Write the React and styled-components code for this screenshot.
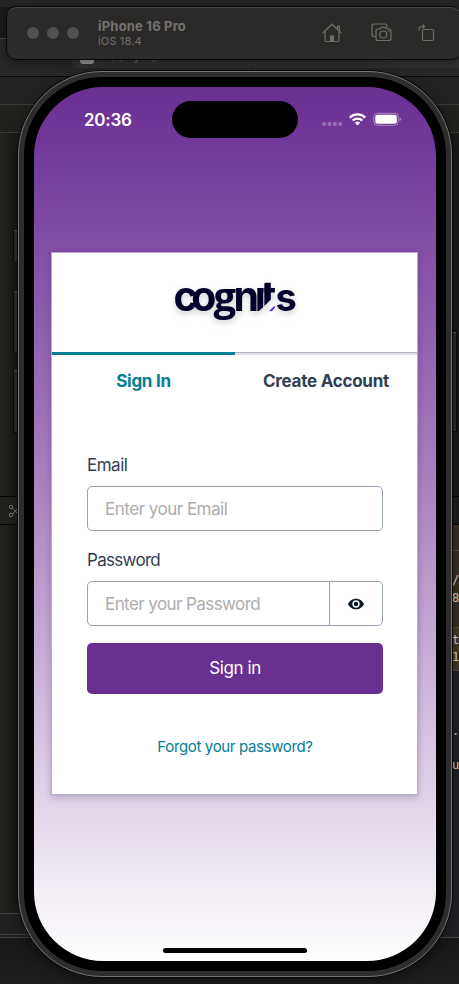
import React from "react";
import styled, { createGlobalStyle, css } from "styled-components";

const Global = createGlobalStyle`
  * { box-sizing: border-box; }
  body { margin: 0; overflow: hidden; background: #1b1b1b; }
  input, button { font: inherit; }
`;

const Desktop = styled.div`
  position: relative;
  width: 459px;
  height: 984px;
  overflow: hidden;
  background: #1f201c;
  font-family: Inter, "Liberation Sans", sans-serif;
`;

/* Editor windows behind the simulator */
const Backdrop = styled.div`
  display: grid;
  grid-template-columns: 250px 209px;
  height: 984px;
`;
const Pane = styled.div`
  display: flex;
  flex-direction: column;
`;
const Band = styled.div`
  flex: none;
  height: ${(p) => p.$h}px;
  padding-bottom: ${(p) => p.$pb || 0}px;
  background: ${(p) => p.$bg};
  border-top: ${(p) => (p.$line ? `1px solid ${p.$line}` : "0")};
  display: flex;
  align-items: ${(p) => p.$align || "center"};
`;
const SchemePill = styled.div`
  width: ${(p) => p.$w}px;
  height: 24px;
  margin-left: ${(p) => p.$ml || 0}px;
  margin-bottom: 8px;
  border-radius: 0 0 0 5px;
  background: #333331;
  color: #5c5c5a;
  font-size: 11.5px;
  line-height: 25px;
  white-space: pre;
  display: flex;
  align-items: center;
  padding-left: 8px;
`;
const AppGlyph = styled.i`
  flex: none;
  width: 14px;
  height: 15px;
  border-radius: 3px;
  background: #a0a0a0;
`;
const SchemePart = styled.span`
  margin-left: ${(p) => p.$ml}px;
`;
const BranchIcon = styled.svg`
  margin-left: 8px;
`;
const Code = styled.div`
  flex: none;
  width: 100%;
  padding-left: 202px;
  color: #dcd8d0;
  font: 12px/17.3px "DejaVu Sans Mono", monospace;
  white-space: nowrap;
  overflow: hidden;
`;

/* Simulator title bar */
const TitleBar = styled.header`
  position: absolute;
  left: 6px;
  top: 6px;
  width: 456px;
  height: 54px;
  display: flex;
  align-items: center;
  padding-left: 20px;
  border: 1px solid #080808;
  border-radius: 10px;
  background: #2b2a28;
  box-shadow: inset 0 1px 0 #464543, 0 4px 12px rgba(0, 0, 0, 0.4);
`;
const Lights = styled.div`
  display: flex;
  gap: 8px;
  margin-right: 19px;
`;
const Light = styled.i`
  width: 12px;
  height: 12px;
  border-radius: 50%;
  background: #52514f;
`;
const DeviceInfo = styled.div`
  flex: 1;
  color: #73726f;
`;
const DeviceName = styled.div`
  font-size: 13px;
  font-weight: 700;
  line-height: 15px;
  letter-spacing: 0.2px;
`;
const DeviceOs = styled.div`
  font-size: 11px;
  line-height: 14px;
  letter-spacing: 0.15px;
`;
const Tools = styled.div`
  display: flex;
  align-items: center;
  width: 139px;
  color: #6f6e6b;
`;
const Tool = styled.svg`
  flex: none;
  margin-right: ${(p) => p.$gap || 0}px;
`;

/* Device */
const SideButton = styled.i`
  position: absolute;
  left: ${(p) => p.$x}px;
  top: ${(p) => p.$y}px;
  width: 7px;
  height: ${(p) => p.$h}px;
  background: #2d2d2d;
  border: 1px solid #0b0b0b;
  box-shadow: inset 0 1px 0 #5c5c5c;
`;
const Phone = styled.main`
  position: absolute;
  left: 18px;
  top: 71px;
  width: 434px;
  height: 906px;
  padding: 5px;
  border: 1px solid #747474;
  border-radius: 84px;
  background: #2d2d2e;
  box-shadow: 0 0 0 1px #0a0a0a, 0 5px 15px rgba(0, 0, 0, 0.45);
`;
const Bezel = styled.div`
  height: 894px;
  padding: 10px;
  border-radius: 78px;
  background: #000;
`;
const Screen = styled.div`
  height: 874px;
  display: flex;
  flex-direction: column;
  border-radius: 69px;
  overflow: hidden;
  background: linear-gradient(#6b2f92 0%, #71389a 6%, #a47abd 42%, #e2d5e9 82%, #fff 100%);
`;
const StatusBar = styled.div`
  height: 165px;
  display: flex;
  align-items: flex-start;
  color: #fff;
`;
const Time = styled.div`
  width: 138px;
  padding: 23px 0 0 50px;
  font-size: 17px;
  line-height: 20px;
  font-weight: 600;
  letter-spacing: -0.25px;
`;
const Island = styled.div`
  width: 126px;
  height: 37px;
  margin-top: 14px;
  border-radius: 19px;
  background: #000;
`;
const StatusIcons = styled.svg`
  margin: 25px 0 0 22px;
`;
const Card = styled.section`
  width: 367px;
  height: 543px;
  margin-left: 17px;
  display: flex;
  flex-direction: column;
  background: #fff;
  box-shadow: 0 2px 7px rgba(45, 20, 80, 0.27);
`;
const Brand = styled.div`
  height: 100px;
  flex: none;
  border: 1px solid #c3a7d4;
  border-bottom: 0;
`;
const AuthPanel = styled.div`
  flex: 1;
  border: 1px solid #aeb3bf;
  display: flex;
  flex-direction: column;
`;
const Tabs = styled.div`
  display: grid;
  grid-template-columns: 183px 182px;
  height: 54px;
`;
const Tab = styled.button`
  border: 0;
  border-top: 2px solid #e0e1e3;
  padding: 0 0 1px;
  background: transparent;
  color: #304050;
  font-size: 17px;
  font-weight: 700;
  letter-spacing: -0.26px;
  white-space: nowrap;
  ${(p) =>
    p.$active &&
    css`
      margin-top: -1px;
      border-top: 3px solid #047d95;
      padding: 0;
      color: #047d95;
    `}
`;
const Form = styled.form`
  padding: 46px 34px 0 35px;
  display: flex;
  flex-direction: column;
`;
const Label = styled.label`
  height: 33px;
  padding-top: 1px;
  color: #304050;
  font-size: 17px;
  line-height: 22px;
  letter-spacing: ${(p) => p.$ls}px;
`;
const Field = styled.div`
  height: 45px;
  margin-bottom: 17px;
  display: flex;
  border: 1px solid #97a2b1;
  border-radius: 5px;
  overflow: hidden;
`;
const Input = styled.input`
  flex: 1;
  min-width: 0;
  border: 0;
  outline: 0;
  padding: 0 17px;
  background: transparent;
  font-size: 17px;
  letter-spacing: ${(p) => p.$ls}px;
  &::placeholder { color: #adadad; opacity: 1; }
`;
const Reveal = styled.button`
  width: 53px;
  padding: 0;
  border: 0;
  border-left: 1px solid #97a2b1;
  background: transparent;
  display: flex;
  align-items: center;
  justify-content: center;
`;
const Submit = styled.button`
  height: 51px;
  padding: 0 0 1px;
  border: 0;
  border-radius: 5px;
  background: #692f91;
  color: #fff;
  font-size: 17px;
  letter-spacing: -0.4px;
`;
const Forgot = styled.a`
  margin-top: 42px;
  text-align: center;
  color: #047d95;
  font-size: 15px;
  line-height: 22px;
  letter-spacing: -0.35px;
`;
const HomeIndicator = styled.div`
  width: 144px;
  height: 5px;
  margin: auto auto 8px 129px;
  border-radius: 3px;
  background: #000;
`;

const LogoText = styled.text`
  font-family: Inter, sans-serif;
  font-size: 41px;
  font-weight: 700;
`;
const LogoG = styled.tspan`
  font-family: "Open Sans", sans-serif;
  font-size: 40px;
  font-weight: 700;
`;
const LogoS = styled.tspan`
  font-size: 38px;
`;

function Logo() {
  return (
    <svg width="365" height="98" viewBox="52 253 365 98">
      <defs>
        <filter id="soft" x="-20%" y="-30%" width="140%" height="180%">
          <feDropShadow dx="0" dy="3" stdDeviation="3" floodColor="#000" floodOpacity="0.18" />
        </filter>
        <mask id="cut">
          <rect x="160" y="270" width="150" height="70" fill="#fff" />
          <path d="M257.500 312.500l14.500-14h4.500v14z" fill="#000" />
          <path d="M263.800 280v32" stroke="#000" strokeWidth=".5" />
        </mask>
      </defs>
      <g filter="url(#soft)" fill="#05032a">
        <g mask="url(#cut)">
          <LogoText y="310.500">
            <tspan x="173.500 191.300">co</tspan>
            <LogoG x="213.500">g</LogoG>
            <tspan x="233.500 254.800 261.300">nıt</tspan>
            <LogoS x="275.500">s</LogoS>
          </LogoText>
          <path d="M264.300 283.500h6v22h-6z" />
        </g>
      </g>
      <path d="M269 311l4.800-4.500h2l-3.800 4.700z" fill="#5b35d5" />
    </svg>
  );
}

export default function App() {
  return (
    <>
      <Global />
      <Desktop>
        <Backdrop>
          <Pane>
            <Band $h={7} $bg="#242422" />
            <Band $h={31} $bg="#1b1b1a" />
            <Band $h={38} $bg="#282826" $line="#4a4a48" $align="flex-end">
              <SchemePill $w={178} $ml={72}>
                <AppGlyph />
                <SchemePart $ml={10}>App</SchemePart>
                <SchemePart $ml={6}>❯</SchemePart>
                <SchemePart $ml={9}>▯</SchemePart>
                <SchemePart $ml={6}>iPhone 16 Pro</SchemePart>
              </SchemePill>
            </Band>
            <Band $h={28} $bg="#222320" $line="#090909" />
            <Band $h={28} $bg="#20211d" $line="#3a3a38" />
            <Band $h={364} $bg="linear-gradient(90deg,#22231d,#191a17 18px)" $line="#3a3a38" />
            <Band $h={28} $bg="#20211d" $line="#050505">
              <BranchIcon width="10" height="14" viewBox="0 0 10 14" fill="none" stroke="#777" strokeWidth="1">
                <circle cx="3" cy="3" r="1.7" />
                <circle cx="3" cy="11" r="1.7" />
                <path d="M4.5 4L9 9M4.5 10L9 5" />
              </BranchIcon>
            </Band>
            <Band $h={389} $bg="linear-gradient(90deg,#22231d,#191a17 18px)" $line="#050505" />
            <Band $h={21} $bg="#202020" $line="#444442" />
            <Band $h={3} $bg="#202020" $line="#3f403b" />
            <Band $h={47} $bg="linear-gradient(#181818,#1e1e1e)" $line="#444442" />
          </Pane>
          <Pane>
            <Band $h={38} $bg="#242422" />
            <Band $h={38} $bg="#282826" $align="flex-end">
              <SchemePill $w={209} />
            </Band>
            <Band $h={28} $bg="#222320" $line="#090909" />
            <Band $h={28} $bg="#20211d" $line="#3a3a38" />
            <Band $h={364} $bg="#191a17" $line="#3a3a38" />
            <Band $h={28} $bg="#1c1d1b" $line="#050505" />
            <Band $h={26} $bg="#3b3121" $line="#050505" />
            <Band $h={77} $bg="#3b3121" $line="#5b5037" $align="flex-end" $pb={20}>
              <Code>/<br />8</Code>
            </Band>
            <Band $h={43} $bg="#463a25" $line="#5b5037">
              <Code>t<br />1</Code>
            </Band>
            <Band $h={267} $bg="#202126" $line="#5b5037" $align="flex-start">
              <Code><br /><br /><br />.<br /><br />u</Code>
            </Band>
            <Band $h={47} $bg="linear-gradient(#181818,#1e1e1e)" $line="#4a4a4c" />
          </Pane>
        </Backdrop>

        <TitleBar>
          <Lights><Light /><Light /><Light /></Lights>
          <DeviceInfo>
            <DeviceName>iPhone 16 Pro</DeviceName>
            <DeviceOs>iOS 18.4</DeviceOs>
          </DeviceInfo>
          <Tools>
            <Tool $gap={29} width="20" height="20" viewBox="0 0 20 20" fill="none" stroke="currentColor" strokeWidth="1.2">
              <path d="M.8 10L10 1.2 19.2 10M3 8.5V17q0 1.5 1.5 1.5h11Q17 18.500 17 17V8.500M15.500 6.500V3h1.800v5" />
              <path d="M8 18.500v-6h4v6z" fill="currentColor" stroke="none" />
            </Tool>
            <Tool $gap={26} width="21" height="20" viewBox="0 0 21 20" fill="none" stroke="currentColor" strokeWidth="1.2">
              <path d="M4.500 13.500H3q-2 0-2-2V3q0-2 2-2h11q2 0 2 2v1.500" />
              <path d="M7 6h2l1-1.700h4.500l1 1.700h2.500q2 0 2 2v7.500q0 2-2 2H7q-2 0-2-2V8q0-2 2-2z" />
              <circle cx="12.300" cy="11.500" r="3.500" />
              <path d="M17 8.200h1.500" />
            </Tool>
            <Tool width="17" height="19" viewBox="0 2 17 19" fill="none" stroke="currentColor" strokeWidth="1.2">
              <rect x="4.500" y="7.500" width="11" height="11" rx="1.500" />
              <path d="M1 8.500V7.500Q1 4.500 4 4.500h2M4.500 2.500L6.600 4.500 4.500 6.500" />
            </Tool>
          </Tools>
        </TitleBar>

        <SideButton $x={13} $y={229} $h={34} />
        <SideButton $x={13} $y={290} $h={64} />
        <SideButton $x={13} $y={369} $h={64} />
        <SideButton $x={450} $y={331} $h={101} />

        <Phone>
          <Bezel>
            <Screen>
              <StatusBar>
                <Time>20:36</Time>
                <Island />
                <StatusIcons width="84" height="15" viewBox="320 112 84 15">
                  <g fill="#fff" opacity=".3">
                    <circle cx="324" cy="124" r="2" />
                    <circle cx="329.500" cy="124" r="2" />
                    <circle cx="334.800" cy="124" r="2" />
                    <circle cx="340.200" cy="124" r="2" />
                  </g>
                  <g fill="none" stroke="#fff" strokeWidth="2.300">
                    <path d="M349.800 117.600a11 11 0 0 1 15.400 0" />
                    <path d="M352.700 120.500a7 7 0 0 1 9.600 0" />
                  </g>
                  <path d="M354.800 122.700a4 4 0 0 1 5.400 0l-2.700 2.800z" fill="#fff" />
                  <rect x="373.800" y="113.300" width="24.500" height="12" rx="3.800" fill="none" stroke="#fff" strokeOpacity=".42" />
                  <rect x="375.300" y="114.800" width="21.500" height="9" rx="2.500" fill="#fff" />
                  <path d="M399.500 117.300q1.500.5 1.500 2t-1.500 2z" fill="#fff" opacity=".42" />
                </StatusIcons>
              </StatusBar>
              <Card>
                <Brand><Logo /></Brand>
                <AuthPanel>
                  <Tabs>
                    <Tab $active>Sign In</Tab>
                    <Tab>Create Account</Tab>
                  </Tabs>
                  <Form onSubmit={(e) => e.preventDefault()}>
                    <Label $ls={-0.5}>Email</Label>
                    <Field><Input placeholder="Enter your Email" $ls={-0.5} /></Field>
                    <Label $ls={-0.7}>Password</Label>
                    <Field>
                      <Input type="password" placeholder="Enter your Password" $ls={-0.58} />
                      <Reveal type="button" aria-label="Show password">
                        <svg width="16" height="16" viewBox="0 0 24 24" fill="#0d1a26">
                          <path d="M12 4C6.500 4 2 7.300 0 12c2 4.700 6.500 8 12 8s10-3.300 12-8c-2-4.700-6.500-8-12-8zm0 13.500a5.500 5.500 0 1 1 0-11 5.500 5.500 0 0 1 0 11zm0-8.800a3.300 3.300 0 1 0 0 6.600 3.300 3.300 0 0 0 0-6.600z" />
                        </svg>
                      </Reveal>
                    </Field>
                    <Submit>Sign in</Submit>
                    <Forgot>Forgot your password?</Forgot>
                  </Form>
                </AuthPanel>
              </Card>
              <HomeIndicator />
            </Screen>
          </Bezel>
        </Phone>
      </Desktop>
    </>
  );
}
